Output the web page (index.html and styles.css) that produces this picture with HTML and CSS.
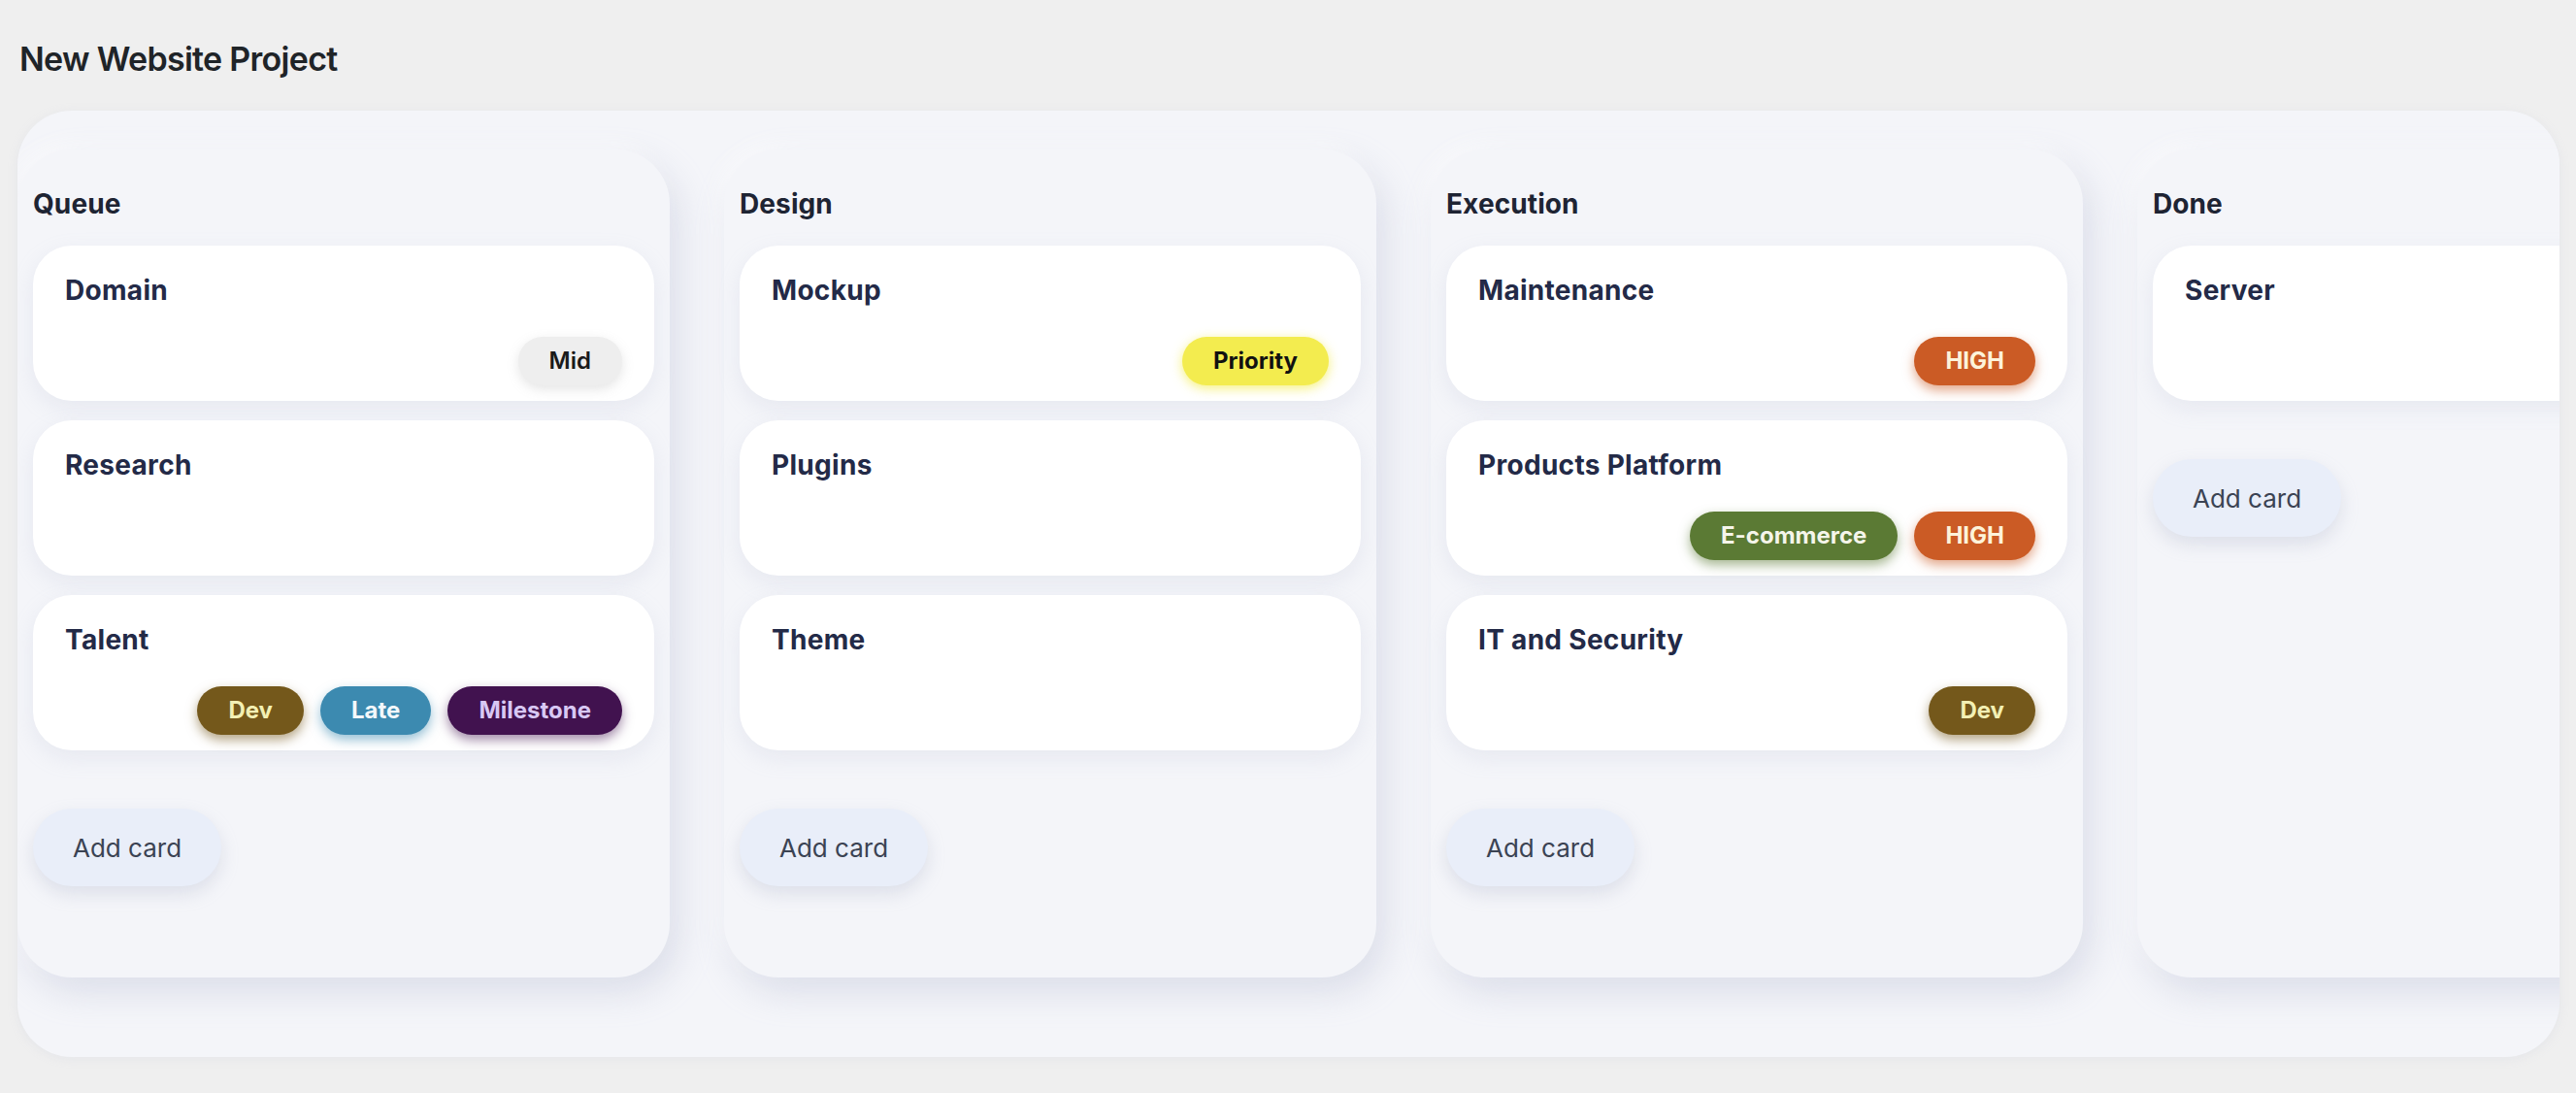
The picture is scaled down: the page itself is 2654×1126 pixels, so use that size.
FILE: index.html
```html
<!DOCTYPE html>
<html lang="en">
<head>
<meta charset="utf-8">
<title>New Website Project</title>
<link rel="stylesheet" href="styles.css">
</head>
<body>
<h1 class="page-title">New Website Project</h1>
<div class="board">
  <section class="lane">
    <h2 class="lane-title">Queue</h2>
    <div class="cards">
      <div class="card"><div class="card-title">Domain</div><div class="tags"><span class="tag tag-mid">Mid</span></div></div>
      <div class="card"><div class="card-title">Research</div></div>
      <div class="card"><div class="card-title">Talent</div><div class="tags"><span class="tag tag-dev">Dev</span><span class="tag tag-late">Late</span><span class="tag tag-milestone">Milestone</span></div></div>
    </div>
    <button class="add-card">Add card</button>
  </section>
  <section class="lane">
    <h2 class="lane-title">Design</h2>
    <div class="cards">
      <div class="card"><div class="card-title">Mockup</div><div class="tags"><span class="tag tag-priority">Priority</span></div></div>
      <div class="card"><div class="card-title">Plugins</div></div>
      <div class="card"><div class="card-title">Theme</div></div>
    </div>
    <button class="add-card">Add card</button>
  </section>
  <section class="lane">
    <h2 class="lane-title">Execution</h2>
    <div class="cards">
      <div class="card"><div class="card-title">Maintenance</div><div class="tags"><span class="tag tag-high">HIGH</span></div></div>
      <div class="card"><div class="card-title">Products Platform</div><div class="tags"><span class="tag tag-ecom">E-commerce</span><span class="tag tag-high">HIGH</span></div></div>
      <div class="card"><div class="card-title">IT and Security</div><div class="tags"><span class="tag tag-dev">Dev</span></div></div>
    </div>
    <button class="add-card">Add card</button>
  </section>
  <section class="lane">
    <h2 class="lane-title">Done</h2>
    <div class="cards">
      <div class="card"><div class="card-title">Server</div></div>
    </div>
    <button class="add-card">Add card</button>
  </section>
</div>
</body>
</html>
```

FILE: styles.css
```css
* { box-sizing: border-box; }

html, body {
  margin: 0;
  background: #efefef;
}

body {
  padding: 0 17px 0 18px;
  font-family: Inter, "Noto Sans", "Liberation Sans", sans-serif;
  height: 1126px;
  overflow: hidden;
}

.page-title {
  margin: 40px 0 33px 2px;
  font-size: 34px;
  line-height: 41px;
  font-weight: 600;
  color: #1f2428;
  letter-spacing: -0.7px;
}

.board {
  display: flex;
  gap: 56px;
  padding: 40px 0 82px 0;
  background: #f4f5f9;
  border-radius: 56px;
  overflow: hidden;
  box-shadow: 0 2px 10px rgba(200, 205, 220, 0.25);
}

.lane {
  flex: 0 0 672px;
  display: flex;
  flex-direction: column;
  align-items: flex-start;
  padding: 39px 16px 94px 16px;
  background: #f4f5f9;
  border-radius: 56px;
  box-shadow: 8px 14px 36px rgba(165, 172, 198, 0.32), -6px -6px 20px rgba(255, 255, 255, 0.7);
}

.lane-title {
  margin: 0 0 26px 0;
  font-size: 28px;
  line-height: 34px;
  font-weight: 700;
  color: #1e2433;
  letter-spacing: 0.1px;
}

.cards {
  display: flex;
  flex-direction: column;
  gap: 20px;
  width: 100%;
}

.card {
  height: 160px;
  display: flex;
  flex-direction: column;
  padding: 30px 33px 16px 33px;
  background: #ffffff;
  border-radius: 40px;
  box-shadow: 0 8px 22px rgba(170, 178, 205, 0.18);
}

.card-title {
  font-size: 28px;
  line-height: 33px;
  font-weight: 700;
  color: #232a47;
  letter-spacing: 0.3px;
}

.tags {
  margin-top: auto;
  display: flex;
  justify-content: flex-end;
  gap: 17px;
}

.tag {
  height: 50px;
  line-height: 50px;
  padding: 0 32px;
  border-radius: 25px;
  font-size: 24px;
  font-weight: 700;
  white-space: nowrap;
}

.tag-mid { background: #eeeeee; color: #1a1a1a; font-weight: 600; box-shadow: 0 4px 12px rgba(150, 150, 150, 0.25); }
.tag-dev { background: #74581b; color: #f3f0b4; box-shadow: 0 5px 12px rgba(116, 88, 27, 0.55); }
.tag-late { background: #3c8ab0; color: #f3f8fb; box-shadow: 0 5px 12px rgba(60, 138, 176, 0.55); }
.tag-milestone { background: #41124f; color: #d8c8f4; box-shadow: 0 5px 12px rgba(65, 18, 79, 0.5); }
.tag-priority { background: #f3ec4f; color: #111111; box-shadow: 0 3px 12px rgba(243, 236, 79, 0.75); }
.tag-high { background: #cb5b25; color: #fdf3da; box-shadow: 0 5px 12px rgba(203, 91, 37, 0.55); }
.tag-ecom { background: #5b7a34; color: #f5f5ea; box-shadow: 0 5px 12px rgba(91, 122, 52, 0.55); }

.add-card {
  margin-top: 60px;
  height: 80px;
  padding: 0 41px;
  border: none;
  border-radius: 40px;
  background: #e9eef9;
  color: #3b4353;
  font-family: inherit;
  font-size: 26px;
  font-weight: 400;
  box-shadow: 0 8px 18px rgba(160, 168, 195, 0.28);
}
```
